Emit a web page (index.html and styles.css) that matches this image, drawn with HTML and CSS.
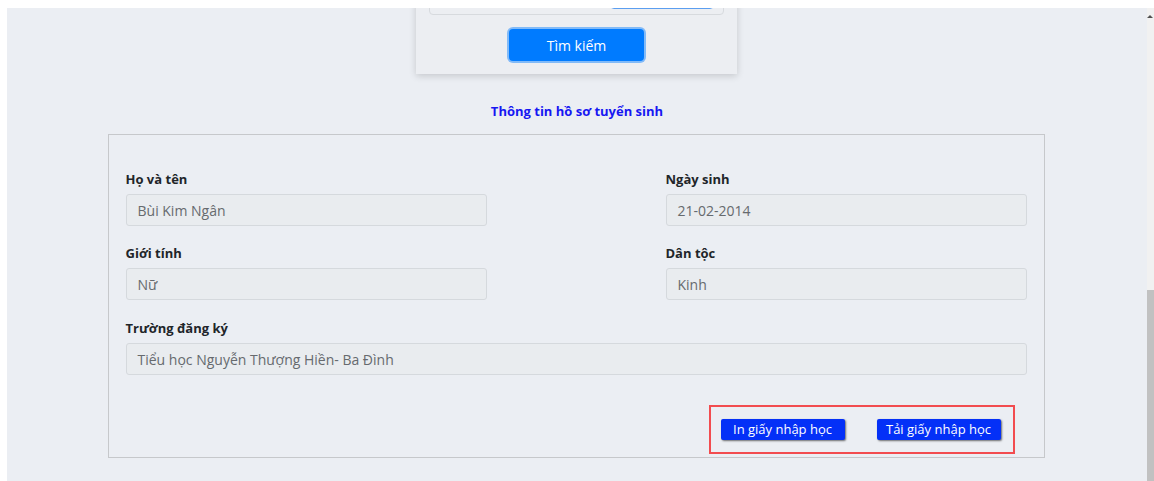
FILE: index.html
```html
<!DOCTYPE html>
<html lang="vi">
<head>
<meta charset="utf-8">
<title>Tra cứu hồ sơ tuyển sinh</title>
<link rel="stylesheet" href="styles.css">
</head>
<body>
<div class="screen">
  <main class="page">
    <section class="search-card">
      <div class="search-fields">
        <div class="field-input"></div>
        <div class="field-select"></div>
      </div>
      <button class="btn-search" type="button">Tìm kiếm</button>
    </section>

    <h2 class="section-title">Thông tin hồ sơ tuyển sinh</h2>

    <section class="profile">
      <div class="profile-grid">
        <div class="field">
          <label class="field-label">Họ và tên</label>
          <div class="field-value">Bùi Kim Ngân</div>
        </div>
        <div class="field">
          <label class="field-label">Ngày sinh</label>
          <div class="field-value">21-02-2014</div>
        </div>
        <div class="field">
          <label class="field-label">Giới tính</label>
          <div class="field-value">Nữ</div>
        </div>
        <div class="field">
          <label class="field-label">Dân tộc</label>
          <div class="field-value">Kinh</div>
        </div>
        <div class="field field-wide">
          <label class="field-label">Trường đăng ký</label>
          <div class="field-value">Tiểu học Nguyễn Thượng Hiền- Ba Đình</div>
        </div>
      </div>
      <div class="actions">
        <div class="actions-box">
          <button class="btn-doc" type="button">In giấy nhập học</button>
          <button class="btn-doc" type="button">Tải giấy nhập học</button>
        </div>
      </div>
    </section>
  </main>
  <div class="scrollbar">
    <div class="scroll-arrow"></div>
    <div class="scroll-track"></div>
    <div class="scroll-thumb"></div>
  </div>
</div>
</body>
</html>
```

FILE: styles.css
```css
* {
  box-sizing: border-box;
}

html, body {
  margin: 0;
  padding: 0;
  background: #ffffff;
  font-family: "Open Sans", "Noto Sans", sans-serif;
}

.screen {
  display: flex;
  height: 481px;
  padding: 8px 0 0 7px;
  overflow: hidden;
}

.page {
  flex: 1;
  background: #ebeef3;
  overflow: hidden;
  display: flex;
  flex-direction: column;
  align-items: center;
}

/* search card, scrolled partly out of view */
.search-card {
  width: 321px;
  margin-top: -52px;
  margin-left: -1px;
  padding: 12px 13px 13px;
  background: #eceef2;
  box-shadow: 0 2px 7px rgba(0, 0, 0, 0.16);
  display: flex;
  flex-direction: column;
  align-items: center;
}

.search-fields {
  align-self: stretch;
  height: 47px;
  border: 1px solid #d7dade;
  border-radius: 4px;
  padding: 5px 9px 5px 11px;
  display: flex;
  gap: 2px;
}

.field-input {
  width: 167px;
  height: 34px;
  background: #ffffff;
  border: 1px solid #cfd4d9;
  border-radius: 3px;
}

.field-select {
  flex: 1;
  height: 35px;
  background: #ffffff;
  border: 1px solid #5b9ef0;
  border-radius: 4px;
}

.btn-search {
  margin-top: 14px;
  width: 135px;
  height: 32px;
  border: none;
  border-radius: 4px;
  background: #007bff;
  color: #ffffff;
  font-family: inherit;
  font-size: 14px;
  box-shadow: 0 0 0 2px rgba(0, 123, 255, 0.45);
}

.section-title {
  margin: 27px 0 0;
  font-size: 13px;
  line-height: 20px;
  font-weight: 700;
  color: #1717f2;
}

.profile {
  width: 937px;
  margin-top: 13px;
  margin-left: -2px;
  border: 1px solid #c6c8cb;
  padding: 35px 17px 3px;
}

.profile-grid {
  display: grid;
  grid-template-columns: 361px 361px;
  justify-content: space-between;
  row-gap: 18px;
}

.field-wide {
  grid-column: 1 / -1;
  margin-top: 1px;
}

.field {
  display: flex;
  flex-direction: column;
  gap: 6px;
}

.field-label {
  font-size: 13px;
  line-height: 18px;
  font-weight: 700;
  color: #212529;
}

.field-value {
  height: 32px;
  padding: 0 11px;
  display: flex;
  align-items: center;
  background: #e9ecef;
  border: 1px solid #d5d9dd;
  border-radius: 3px;
  font-size: 14px;
  color: #666a6e;
}

.actions {
  margin-top: 30px;
  display: flex;
  justify-content: flex-end;
  padding-right: 12px;
}

.actions-box {
  border: 2px solid #f24c4f;
  padding: 12px 12px 12px 10px;
  display: flex;
  gap: 32px;
}

.btn-doc {
  width: 124px;
  height: 21px;
  padding: 0;
  border: none;
  border-radius: 2px;
  background: #0430f7;
  color: #ffffff;
  font-family: inherit;
  font-size: 13px;
  line-height: 21px;
  text-align: center;
  box-shadow: 1px 1px 2px rgba(0, 0, 0, 0.55);
}

/* page scrollbar */
.scrollbar {
  width: 7px;
  display: flex;
  flex-direction: column;
  background: #f1f1f1;
}

.scroll-arrow {
  height: 10px;
  display: flex;
  justify-content: flex-end;
  align-items: flex-end;
  padding-right: 1px;
}

.scroll-arrow::before {
  content: "";
  border-left: 3px solid transparent;
  border-right: 3px solid transparent;
  border-bottom: 3px solid #505050;
}

.scroll-track {
  height: 272px;
}

.scroll-thumb {
  flex: 1;
  background: #c1c1c1;
}
```
